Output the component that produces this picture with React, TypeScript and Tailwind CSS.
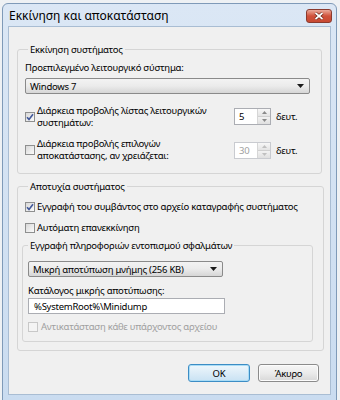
import React from 'react';

const font = "font-['Noto_Sans',sans-serif]";

function Check({ checked, disabled }: { checked?: boolean; disabled?: boolean }) {
  return (
    <span
      className={`w-[10px] h-[10px] shrink-0 border flex items-center justify-center ${
        disabled ? 'border-[#c8c8c8] bg-[#f4f4f4]' : 'border-[#8e8f8f] bg-gradient-to-br from-[#d8d8d8] to-[#fbfbfb]'
      }`}
    >
      {checked && (
        <svg width="8" height="8" viewBox="0 0 8 8">
          <path d="M1 4.2 L3 6.4 L7 1.2" fill="none" stroke="#41589a" strokeWidth="1.6" />
        </svg>
      )}
    </span>
  );
}

function Spin({ value, disabled }: { value: string; disabled?: boolean }) {
  return (
    <div className={`flex h-[17px] w-[37px] border ${disabled ? 'border-[#c9cbd0]' : 'border-[#abadb3]'} bg-white`}>
      <div className={`flex-1 flex items-center pl-[4px] ${disabled ? 'text-[#a0a0a0]' : 'text-black'}`}>{value}</div>
      <div className="w-[13px] flex flex-col border-l border-[#d6d6d6]">
        <div className="flex-1 flex items-center justify-center bg-gradient-to-b from-[#f7f7f7] to-[#e4e4e4] border-b border-[#d0d0d0]">
          <svg width="5" height="3" viewBox="0 0 5 3"><path d="M0 3 L2.5 0 L5 3Z" fill={disabled ? '#c0c0c0' : '#8a8a8a'} /></svg>
        </div>
        <div className="flex-1 flex items-center justify-center bg-gradient-to-b from-[#f2f2f2] to-[#e0e0e0]">
          <svg width="5" height="3" viewBox="0 0 5 3"><path d="M0 0 L2.5 3 L5 0Z" fill={disabled ? '#c0c0c0' : '#8a8a8a'} /></svg>
        </div>
      </div>
    </div>
  );
}

function Combo({ text, width }: { text: string; width: string }) {
  return (
    <div className={`${width} h-[16px] border border-[#8a8a8a] rounded-[2px] bg-gradient-to-b from-[#f3f3f3] via-[#ebebeb] to-[#d6d6d6] flex items-center justify-between pl-[4px] pr-[5px]`}>
      <span>{text}</span>
      <svg width="7" height="4" viewBox="0 0 7 4"><path d="M0 0 L7 0 L3.5 4Z" fill="#1a1a1a" /></svg>
    </div>
  );
}

export default function App() {
  return (
    <div className={`w-[340px] h-[400px] overflow-hidden bg-[#eef1f4] pl-[2px] pt-[3px] ${font} text-[9.5px] tracking-[-0.25px] leading-[13px] text-black`}>
      <div className="w-[335px] h-[398px] rounded-t-[6px] border border-[#7f9ab8] bg-gradient-to-b from-[#dbe7f5] to-[#cadcf0] flex flex-col px-[5px] pb-[5px]">
        {/* title bar */}
        <div className="h-[22px] flex items-center justify-between pt-[1px]">
          <span className="pl-[1px] text-[12px] tracking-normal text-black">Εκκίνηση και αποκατάσταση</span>
          <div className="w-[26px] h-[14px] -mr-[1px] rounded-[3px] border border-[#8a3a2e] bg-gradient-to-b from-[#e9a99b] via-[#d0513b] to-[#c84a33] flex items-center justify-center">
            <svg width="10" height="8" viewBox="0 0 10 8">
              <path d="M1.5 1 L8.5 7 M8.5 1 L1.5 7" stroke="#5a1a10" strokeWidth="3" />
              <path d="M1.5 1 L8.5 7 M8.5 1 L1.5 7" stroke="#ffffff" strokeWidth="1.7" />
            </svg>
          </div>
        </div>

        {/* client */}
        <div className="flex-1 bg-[#f0f0f0] border border-[#a9bdd3] flex flex-col">
          <fieldset className="mt-[16px] ml-[8px] w-[305px] border border-[#d5d5d5] rounded-[3px] pl-[7px] pr-[10px] pb-[11px]">
            <legend className="ml-[3px] px-[2px]">Εκκίνηση συστήματος</legend>
            <div className="mt-[5px]">Προεπιλεγμένο λειτουργικό σύστημα:</div>
            <div className="mt-[4px]">
              <Combo text="Windows 7" width="w-[285px]" />
            </div>
            <div className="mt-[11px] flex items-center">
              <Check checked />
              <div className="ml-[2px] w-[190px] leading-[11.5px]">
                Διάρκεια προβολής λίστας λειτουργικών
                <br />
                συστημάτων:
              </div>
              <div className="ml-[7px]"><Spin value="5" /></div>
              <span className="ml-[5px]">δευτ.</span>
            </div>
            <div className="mt-[10px] flex items-center">
              <Check />
              <div className="ml-[2px] w-[190px] leading-[12px]">
                Διάρκεια προβολής επιλογών
                <br />
                αποκατάστασης, αν χρειάζεται:
              </div>
              <div className="ml-[7px]"><Spin value="30" disabled /></div>
              <span className="ml-[5px]">δευτ.</span>
            </div>
          </fieldset>

          <fieldset className="mt-[6px] ml-[8px] w-[305px] border border-[#d5d5d5] rounded-[3px] pl-[7px] pr-[10px] pb-[8px]">
            <legend className="ml-[3px] px-[2px]">Αποτυχία συστήματος</legend>
            <div className="mt-[7px] flex items-center gap-[2px]">
              <Check checked />
              <span className="whitespace-nowrap">Εγγραφή του συμβάντος στο αρχείο καταγραφής συστήματος</span>
            </div>
            <div className="mt-[8px] flex items-center gap-[2px]">
              <Check />
              <span>Αυτόματη επανεκκίνηση</span>
            </div>
            <fieldset className="mt-[5px] -ml-[3px] w-[291px] border border-[#d5d5d5] rounded-[3px] pl-[5px] pb-[8px]">
              <legend className="px-[2px]">Εγγραφή πληροφοριών εντοπισμού σφαλμάτων</legend>
              <div className="mt-[9px]">
                <Combo text="Μικρή αποτύπωση μνήμης (256 KB)" width="w-[195px]" />
              </div>
              <div className="mt-[7px]">Κατάλογος μικρής αποτύπωσης:</div>
              <div className="mt-[1px] w-[197px] h-[16px] border border-[#abadb3] bg-white flex items-center pl-[5px]">
                %SystemRoot%\Minidump
              </div>
              <div className="mt-[6px] flex items-center gap-[3px] text-[#a0a0a0]">
                <Check disabled />
                <span>Αντικατάσταση κάθε υπάρχοντος αρχείου</span>
              </div>
            </fieldset>
          </fieldset>

          <div className="mt-[13px] flex justify-end gap-[8px] pr-[11px]">
            <button className="w-[62px] h-[18px] rounded-[3px] border border-[#3c8dc5] bg-gradient-to-b from-[#eef7fd] via-[#dcecf7] to-[#c9e2f3] shadow-[inset_0_0_0_1px_#a9dcf6]">
              OK
            </button>
            <button className="w-[61px] h-[18px] rounded-[3px] border border-[#8b8b8b] bg-gradient-to-b from-[#f6f6f6] via-[#ebebeb] to-[#d8d8d8] shadow-[inset_0_0_0_1px_#fcfcfc]">
              Άκυρο
            </button>
          </div>
        </div>
      </div>
    </div>
  );
}
